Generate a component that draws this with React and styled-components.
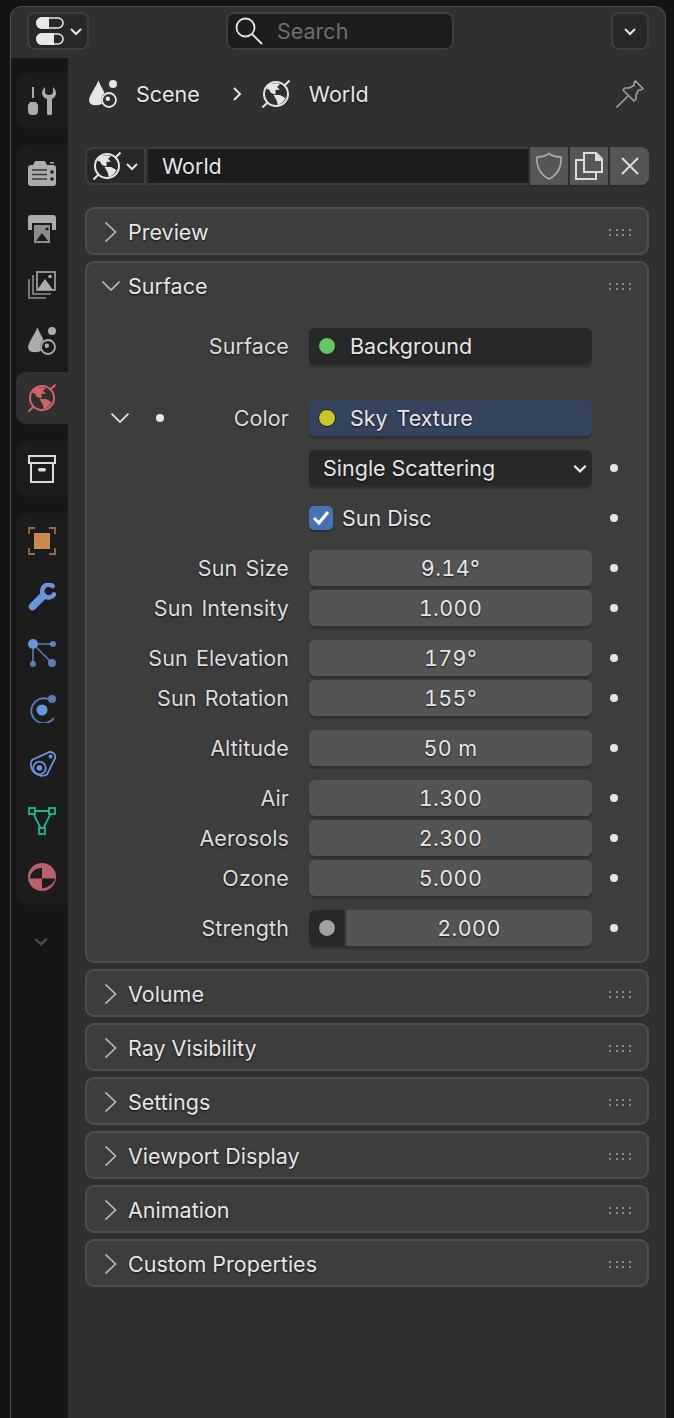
import React from "react"
import styled, { createGlobalStyle } from "styled-components"

const GlobalStyle = createGlobalStyle`
  html, body {
    margin: 0;
    padding: 0;
    background: #141414;
  }
  * {
    box-sizing: border-box;
  }
`

const Frame = styled.div`
  width: 656px;
  height: 1412px;
  margin: 6px 0 0 10px;
  background: #303030;
  border: 1px solid #505050;
  border-bottom: none;
  border-radius: 12px 12px 0 0;
  display: flex;
  flex-direction: column;
  overflow: hidden;
  font-family: Inter, "Noto Sans", sans-serif;
  font-size: 21.5px;
  color: #e6e6e6;
`

const TopBar = styled.div`
  height: 51px;
  flex: none;
  display: flex;
  align-items: flex-start;
  padding: 5px 16px 0 16px;
`

const HeaderButton = styled.div`
  width: ${(p) => p.$width}px;
  height: 38px;
  background: #282828;
  border: 2px solid #3d3d3d;
  border-radius: 8px;
  display: flex;
  align-items: center;
  padding-left: ${(p) => p.$pad || 0}px;
  gap: 5px;
  justify-content: ${(p) => (p.$pad ? "flex-start" : "center")};
  margin-left: ${(p) => (p.$push ? "auto" : "0")};
`

const SearchBox = styled.div`
  width: 228px;
  height: 38px;
  margin-left: 137px;
  background: #1d1d1d;
  border: 2px solid #3d3d3d;
  border-radius: 8px;
  display: flex;
  align-items: center;
  padding-left: 7px;
  gap: 14px;
  color: #6e6e6e;
`

const Body = styled.div`
  flex: 1;
  display: flex;
  min-height: 0;
`

const Sidebar = styled.div`
  width: 57px;
  flex: none;
  background: #161616;
  padding: 15px 0 0 5px;
  display: flex;
  flex-direction: column;
  gap: 16px;
`

const TabGroup = styled.div`
  background: #1c1c1c;
  border-radius: 10px 0 0 10px;
  display: flex;
  flex-direction: column;
`

const Tab = styled.div`
  height: ${(p) => (p.$active ? 52 : 56)}px;
  margin: ${(p) => (p.$active ? "3px 0 1px" : "0")};
  display: flex;
  align-items: center;
  padding-left: 12px;
  color: ${(p) => p.$color || "#acacac"};
  background: ${(p) => (p.$active ? "#303030" : "transparent")};
  border-radius: 10px 0 0 10px;
`

const MoreTabs = styled.div`
  height: 20px;
  margin-top: 10px;
  padding-left: 17px;
  display: flex;
  align-items: center;
  color: #4d4d4d;
`

const Main = styled.div`
  flex: 1;
  padding: 0 16px 0 17px;
  min-width: 0;
`

const Breadcrumb = styled.div`
  height: 72px;
  padding-bottom: 1px;
  display: flex;
  align-items: center;
  margin-right: 5px;
`

const Crumb = styled.span`
  margin-left: ${(p) => p.$gap}px;
  display: flex;
  align-items: center;
  text-shadow: 0 1px 2px rgba(0, 0, 0, 0.75);
`

const PinSlot = styled.span`
  margin-left: auto;
  display: flex;
  color: #9c9c9c;
`

const IdRow = styled.div`
  height: 38px;
  margin: 17px 0 22px;
  display: flex;
  gap: 2px;
`

const IdPicker = styled.div`
  width: 61px;
  background: #282828;
  border: 2px solid #3d3d3d;
  border-radius: 8px 0 0 8px;
  display: flex;
  align-items: center;
  padding-left: 6px;
  gap: 4px;
`

const IdName = styled.div`
  flex: 1;
  background: #1d1d1d;
  border-top: 2px solid #3d3d3d;
  border-bottom: 2px solid #3d3d3d;
  display: flex;
  align-items: center;
  padding-left: 14px;
  text-shadow: 0 1px 2px rgba(0, 0, 0, 0.75);
`

const IdButton = styled.div`
  width: ${(p) => (p.$last ? 39 : 38)}px;
  background: #565656;
  border-radius: ${(p) => (p.$last ? "0 8px 8px 0" : "0")};
  display: flex;
  align-items: center;
  justify-content: center;
  color: ${(p) => p.$color || "#dcdcdc"};
  box-shadow: 0 2px 0 #2a2a2a;
`

const Panels = styled.div`
  display: flex;
  flex-direction: column;
  gap: 6px;
`

const Panel = styled.section`
  background: #3d3d3d;
  border: 2px solid #4e4e4e;
  border-radius: 9px;
`

const PanelHead = styled.div`
  height: 44px;
  padding: 2px 16px 0 15px;
  display: flex;
  align-items: center;
  color: #e6e6e6;
  text-shadow: 0 1px 2px rgba(0, 0, 0, 0.75);
`

const PanelChevron = styled.span`
  width: 26px;
  display: flex;
  color: #b8b8b8;
`

const Grip = styled.span`
  margin-left: auto;
  display: grid;
  grid-template-columns: repeat(4, 2px);
  grid-auto-rows: 2px;
  gap: 3px 4.6px;
  span {
    background: #8a8a8a;
  }
`

const PanelBody = styled.div`
  padding: 21px 0 15px;
  display: flex;
  flex-direction: column;
  gap: 14px;
`

const Group = styled.div`
  display: flex;
  flex-direction: column;
  gap: 4px;
  margin-bottom: ${(p) => p.$after || 0}px;
`

const Row = styled.div`
  display: grid;
  grid-template-columns: 222px 283px 44px;
  height: 36px;
  align-items: center;
`

const LabelCell = styled.div`
  display: flex;
  align-items: center;
  justify-content: flex-end;
  width: 202px;
  color: #dcdcdc;
  word-spacing: 2px;
  letter-spacing: 0.1px;
  text-shadow: 0 1px 2px rgba(0, 0, 0, 0.75);
`

const Expander = styled.span`
  display: flex;
  align-items: center;
  margin-right: auto;
  padding-left: 24px;
  gap: 27px;
  color: #e6e6e6;
`

const Field = styled.div`
  height: 36px;
  border-radius: 6px;
  background: ${(p) => (p.$tone === "num" ? "#545454" : p.$tone === "link" ? "#35435c" : "#282828")};
  box-shadow: 0 3px 1px rgba(0, 0, 0, 0.2);
  display: flex;
  align-items: center;
  justify-content: ${(p) => (p.$tone === "num" ? "center" : "flex-start")};
  padding: 0 ${(p) => (p.$tone === "select" ? 4 : 0)}px 0 ${(p) => (p.$tone === "select" ? 14 : p.$tone === "num" ? 0 : 9)}px;
  text-shadow: 0 1px 2px rgba(0, 0, 0, 0.75);
  overflow: hidden;
  font-variant-numeric: tabular-nums;
  letter-spacing: ${(p) => (p.$tone === "num" ? "0.4px" : "0")};
  word-spacing: ${(p) => (p.$tone === "link" ? "3px" : "0")};
`

const Socket = styled.span`
  width: 18px;
  height: 18px;
  flex: none;
  border-radius: 50%;
  background: ${(p) => p.$color};
  border: 1.5px solid #1b1b1b;
  margin-right: ${(p) => p.$gap || 0}px;
`

const SelectArrow = styled.span`
  margin-left: auto;
  display: flex;
  color: #e6e6e6;
`

const CheckLine = styled.div`
  display: flex;
  align-items: center;
  gap: 9px;
  color: #e6e6e6;
  text-shadow: 0 1px 2px rgba(0, 0, 0, 0.75);
`

const CheckBox = styled.span`
  width: 24px;
  height: 24px;
  background: #4772b3;
  border-radius: 5px;
  box-shadow: 0 2px 1px rgba(0, 0, 0, 0.25);
  display: flex;
  align-items: center;
  justify-content: center;
`

const DotCell = styled.span`
  display: flex;
  justify-content: center;
`

const Dot = styled.span`
  width: 8px;
  height: 8px;
  border-radius: 50%;
  background: #e6e6e6;
`

const SliderCap = styled.span`
  width: 37px;
  align-self: stretch;
  background: #282828;
  border-right: 2px solid #333;
  display: flex;
  align-items: center;
  justify-content: center;
  flex: none;
`

const SliderValue = styled.span`
  flex: 1;
  text-align: center;
`

const Icon = ({ size = 28, children, ...rest }) => (
  <svg width={size} height={size} viewBox="0 0 28 28" fill="none" {...rest}>
    {children}
  </svg>
)

const Chevron = ({ dir = "down", size = 14, weight = 2 }) => {
  const d = {
    down: "M2 5 L7 10 L12 5",
    right: "M4 1 L10 7 L4 13",
  }[dir]
  return (
    <svg width={size} height={size} viewBox="0 0 14 14" fill="none">
      <path d={d} stroke="currentColor" strokeWidth={weight} />
    </svg>
  )
}

const PanelArrow = ({ open }) => (
  <svg width="18" height="20" viewBox="0 0 18 20" fill="none">
    <path d={open ? "M0.5 5.5 L9 14 L17.5 5.5" : "M3.5 0.5 L13.5 10 L3.5 19.5"} stroke="currentColor" strokeWidth="1.7" />
  </svg>
)

const EditorIcon = () => (
  <Icon style={{ color: "#e8e8e8" }}>
    <rect x="1" y="1" width="26" height="10" rx="5" stroke="currentColor" strokeWidth="1.6" />
    <path d="M6 0 H13 V12 H6 A6 6 0 0 1 6 0 Z" fill="currentColor" />
    <rect x="1" y="17" width="26" height="10" rx="5" stroke="currentColor" strokeWidth="1.6" />
    <path d="M6 16 H18 V28 H6 A6 6 0 0 1 6 16 Z" fill="currentColor" />
  </Icon>
)

const SearchIcon = () => (
  <Icon style={{ color: "#e6e6e6" }}>
    <circle cx="10.5" cy="10.5" r="9" stroke="currentColor" strokeWidth="1.8" />
    <path d="M17 17 L27 27" stroke="currentColor" strokeWidth="1.9" />
  </Icon>
)

const SceneIcon = () => (
  <Icon>
    <path d="M9.5 0.5 C11 5 14 9 15.5 13 C12.5 15.5 11.5 19 13 24 C9 25.5 5 25.5 2.5 24.5 C0 23 -0.5 20 0.8 17 C3 12 7 6 9.5 0.5 Z" fill="currentColor" />
    <circle cx="24" cy="4" r="4" fill="currentColor" />
    <circle cx="20" cy="20" r="7" stroke="currentColor" strokeWidth="1.8" />
    <circle cx="18.8" cy="18.8" r="2.2" fill="currentColor" />
  </Icon>
)

const WorldIcon = () => (
  <Icon>
    <circle cx="14" cy="14" r="12" stroke="currentColor" strokeWidth="2" />
    <path d="M22.5 5.5 L27.5 0.5 M0.5 27.5 L5.5 22.5" stroke="currentColor" strokeWidth="2" />
    <path d="M6 5.5 C9 3 15 2.5 18 4 L15 7 L18 9.5 L13.5 10 L13.5 14.5 L9 13 L7 9.5 L4.5 9 Z" fill="currentColor" />
    <path d="M11.5 15 L18 15 L23.5 18 L21 22 L16 25.5 L14.5 20 Z" fill="currentColor" />
  </Icon>
)

const PinIcon = () => (
  <Icon>
    <path
      d="M19.5 1 L27 8.5 L24.5 10 L22.5 10 L20 15 L20 19 L18 21 L7 10 L9 8 L13 8 L18 5.5 L18 3.5 Z"
      stroke="currentColor"
      strokeWidth="1.7"
      strokeLinejoin="round"
    />
    <path d="M0.5 27.5 L12 16" stroke="currentColor" strokeWidth="1.7" />
  </Icon>
)

const ShieldIcon = () => (
  <Icon>
    <path
      d="M14 1.5 C17 4 21 5 26 5 C26.5 14 24 22 14 27 C4 22 1.5 14 2 5 C7 5 11 4 14 1.5 Z"
      stroke="currentColor"
      strokeWidth="1.7"
    />
  </Icon>
)

const CopyIcon = () => (
  <Icon>
    <path d="M9 8 H1 V27 H21 V20" stroke="currentColor" strokeWidth="2" />
    <path d="M9 1 H21 L27 7 V20 H9 Z" stroke="currentColor" strokeWidth="2" />
    <path d="M20 1 L28 9 H20 Z" fill="currentColor" />
  </Icon>
)

const CloseIcon = () => (
  <svg width="18" height="18" viewBox="0 0 18 18" fill="none">
    <path d="M1 1 L17 17 M17 1 L1 17" stroke="currentColor" strokeWidth="2" />
  </svg>
)

const ToolIcon = () => (
  <Icon>
    <path d="M5 0 V11" stroke="currentColor" strokeWidth="2" />
    <path d="M2 15 H8 L10 18 V24 A4 4 0 0 1 6 28 H4 A4 4 0 0 1 0 24 V18 Z" fill="currentColor" />
    <path
      d="M17 0 V5 C17 7 19 8 21 8 C23 8 25 7 25 5 V0 C27 2 28 4 28 6 C28 9 26 11 24 12 V26 A2.5 2.5 0 0 1 19 26 V12 C16 11 14 9 14 6 C14 4 15 2 17 0 Z"
      fill="currentColor"
    />
  </Icon>
)

const RenderIcon = () => (
  <Icon>
    <path
      d="M3 6 H5 L7 2 H17 L19 6 H25 A3 3 0 0 1 28 9 V24 A3 3 0 0 1 25 27 H3 A3 3 0 0 1 0 24 V9 A3 3 0 0 1 3 6 Z"
      fill="currentColor"
    />
    <rect x="22" y="3" width="4" height="1.5" fill="currentColor" />
    <path d="M4 11 H19 M4 15.5 H19 M4 20 H19" stroke="#1c1c1c" strokeWidth="1.3" opacity="0.8" />
    <circle cx="24" cy="13" r="1.8" fill="#1c1c1c" />
    <circle cx="24" cy="20" r="1.8" fill="#1c1c1c" />
  </Icon>
)

const OutputIcon = () => (
  <Icon>
    <path d="M3 0 H25 A3 3 0 0 1 28 3 V15 H24 V8 H4 V15 H0 V3 A3 3 0 0 1 3 0 Z" fill="currentColor" />
    <rect x="6" y="10" width="16" height="18" fill="#8d8d8d" />
    <path d="M8 26 L14 18 L20 26 Z" fill="#1c1c1c" />
    <circle cx="19" cy="14" r="1.6" fill="#1c1c1c" />
  </Icon>
)

const LayersIcon = () => (
  <Icon>
    <rect x="9" y="1" width="18" height="18" stroke="currentColor" strokeWidth="1.6" />
    <path d="M9 19 L17 8 L25 19 Z" fill="currentColor" />
    <circle cx="22" cy="5.5" r="1.8" fill="currentColor" />
    <path d="M6 5 H5 V23 H23" stroke="#8e8e8e" strokeWidth="1.6" />
    <path d="M2 9 H1 V27 H18" stroke="#8e8e8e" strokeWidth="1.6" />
  </Icon>
)

const CollectionIcon = () => (
  <Icon>
    <rect x="1" y="1" width="26" height="7" stroke="currentColor" strokeWidth="2" />
    <path d="M3 8 V27 H25 V8" stroke="currentColor" strokeWidth="2" />
    <rect x="10" y="13" width="8" height="3.5" rx="1.75" fill="currentColor" />
  </Icon>
)

const ObjectIcon = () => (
  <Icon>
    <rect x="6" y="6" width="16" height="16" fill="#c88a50" />
    <path d="M1 7 V1 H7 M21 1 H27 V7 M27 21 V27 H21 M7 27 H1 V21" stroke="#9a6e45" strokeWidth="1.8" />
  </Icon>
)

const ModifierIcon = () => (
  <Icon>
    <path d="M4.5 23.5 L15 13" stroke="currentColor" strokeWidth="7.5" strokeLinecap="round" />
    <path d="M24.5 3 A6.4 6.4 0 1 0 26 11.5" stroke="currentColor" strokeWidth="4.6" strokeLinecap="round" />
  </Icon>
)

const ParticlesIcon = () => (
  <Icon>
    <path d="M5 5 H25 M5 5 V24 M5 5 L23 23" stroke="currentColor" strokeWidth="1.6" opacity="0.8" />
    <circle cx="5" cy="5" r="5" fill="currentColor" />
    <circle cx="25" cy="5" r="3" fill="currentColor" opacity="0.8" />
    <circle cx="5" cy="25" r="3" fill="currentColor" opacity="0.8" />
    <circle cx="24" cy="24" r="4" fill="currentColor" opacity="0.8" />
  </Icon>
)

const PhysicsIcon = () => (
  <Icon>
    <path d="M20 4 A12.5 12.5 0 1 0 26 23" stroke="currentColor" strokeWidth="1.8" opacity="0.8" />
    <circle cx="14" cy="15" r="5.5" fill="currentColor" />
    <circle cx="24" cy="4" r="4" fill="currentColor" opacity="0.8" />
  </Icon>
)

const ConstraintIcon = () => (
  <Icon>
    <path d="M4 9 L21 1.2 A5 5 0 0 1 27.2 7 L19 23.5 A11 11 0 0 1 4 9 Z" stroke="currentColor" strokeWidth="1.8" />
    <circle cx="11.5" cy="17" r="6.3" stroke="currentColor" strokeWidth="1.8" />
    <circle cx="11.5" cy="17" r="2.8" fill="currentColor" />
    <circle cx="22.5" cy="5.5" r="2" fill="currentColor" />
  </Icon>
)

const MeshIcon = () => (
  <Icon>
    <path d="M4 4 H24 L14 24 Z" stroke="currentColor" strokeWidth="1.8" />
    <rect x="1" y="1" width="6" height="6" fill="#1c1c1c" stroke="currentColor" strokeWidth="1.8" />
    <rect x="21" y="1" width="6" height="6" fill="#1c1c1c" stroke="currentColor" strokeWidth="1.8" />
    <rect x="11" y="21" width="6" height="6" fill="#1c1c1c" stroke="currentColor" strokeWidth="1.8" />
  </Icon>
)

const MaterialIcon = () => (
  <Icon>
    <circle cx="14" cy="14" r="14" fill="currentColor" />
    <path d="M14 5 V15.5 H2 C2 10 6.5 5 14 5 Z" fill="#1c1c1c" />
    <path d="M14 15.5 H27 C26 20 21 24.5 14 25.5 Z" fill="#1c1c1c" />
  </Icon>
)

const Check = () => (
  <svg width="18" height="16" viewBox="0 0 18 16" fill="none">
    <path d="M2 8 L7 13 L16 2" stroke="#fff" strokeWidth="3" />
  </svg>
)

const tabGroups = [
  [{ icon: ToolIcon }],
  [
    { icon: RenderIcon },
    { icon: OutputIcon },
    { icon: LayersIcon },
    { icon: SceneIcon },
    { icon: WorldIcon, color: "#d2616c", active: true },
  ],
  [{ icon: CollectionIcon, color: "#dcdcdc" }],
  [
    { icon: ObjectIcon },
    { icon: ModifierIcon, color: "#6a94dc" },
    { icon: ParticlesIcon, color: "#6a94dc" },
    { icon: PhysicsIcon, color: "#6a94dc" },
    { icon: ConstraintIcon, color: "#6a94dc" },
    { icon: MeshIcon, color: "#1fb892" },
    { icon: MaterialIcon, color: "#b9606c" },
  ],
]

const valueGroups = [
  [
    ["Sun Size", "9.14°"],
    ["Sun Intensity", "1.000"],
  ],
  [
    ["Sun Elevation", "179°"],
    ["Sun Rotation", "155°"],
  ],
  [["Altitude", "50 m"]],
  [
    ["Air", "1.300"],
    ["Aerosols", "2.300"],
    ["Ozone", "5.000"],
  ],
]

const PanelHeader = ({ title, open }) => (
  <PanelHead>
    <PanelChevron>
      <PanelArrow open={open} />
    </PanelChevron>
    {title}
    <Grip>
      {Array.from({ length: 8 }).map((_, i) => (
        <span key={i} />
      ))}
    </Grip>
  </PanelHead>
)

const PropRow = ({ label, children, dot = true, extra }) => (
  <Row>
    <LabelCell>
      {extra}
      {label}
    </LabelCell>
    {children}
    <DotCell>{dot && <Dot />}</DotCell>
  </Row>
)

export default function App() {
  return (
    <>
      <GlobalStyle />
      <Frame>
        <TopBar>
          <HeaderButton $width={62} $pad={7}>
            <EditorIcon />
            <Chevron />
          </HeaderButton>
          <SearchBox>
            <SearchIcon />
            Search
          </SearchBox>
          <HeaderButton $width={38} $push>
            <Chevron />
          </HeaderButton>
        </TopBar>
        <Body>
          <Sidebar>
            {tabGroups.map((tabs, i) => (
              <TabGroup key={i}>
                {tabs.map((t, j) => (
                  <Tab key={j} $color={t.color} $active={t.active}>
                    <t.icon />
                  </Tab>
                ))}
              </TabGroup>
            ))}
            <MoreTabs>
              <Chevron size={16} />
            </MoreTabs>
          </Sidebar>
          <Main>
            <Breadcrumb>
              <Crumb $gap={4} style={{ color: "#e6e6e6" }}>
                <SceneIcon />
              </Crumb>
              <Crumb $gap={19}>Scene</Crumb>
              <Crumb $gap={30}>
                <Chevron dir="right" size={14} />
              </Crumb>
              <Crumb $gap={18}>
                <WorldIcon />
              </Crumb>
              <Crumb $gap={19}>World</Crumb>
              <PinSlot>
                <PinIcon />
              </PinSlot>
            </Breadcrumb>
            <IdRow>
              <IdPicker>
                <WorldIcon />
                <Chevron />
              </IdPicker>
              <IdName>World</IdName>
              <IdButton $color="#a9a9a9">
                <ShieldIcon />
              </IdButton>
              <IdButton>
                <CopyIcon />
              </IdButton>
              <IdButton $last>
                <CloseIcon />
              </IdButton>
            </IdRow>
            <Panels>
              <Panel>
                <PanelHeader title="Preview" />
              </Panel>
              <Panel>
                <PanelHeader title="Surface" open />
                <PanelBody>
                  <Group $after={22}>
                    <PropRow label="Surface" dot={false}>
                      <Field>
                        <Socket $color="#63c763" $gap={14} />
                        Background
                      </Field>
                    </PropRow>
                  </Group>
                  <PropRow
                    label="Color"
                    dot={false}
                    extra={
                      <Expander>
                        <PanelArrow open />
                        <Dot />
                      </Expander>
                    }
                  >
                    <Field $tone="link">
                      <Socket $color="#c7c729" $gap={14} />
                      Sky Texture
                    </Field>
                  </PropRow>
                  <PropRow label="">
                    <Field $tone="select">
                      Single Scattering
                      <SelectArrow>
                        <Chevron size={16} />
                      </SelectArrow>
                    </Field>
                  </PropRow>
                  <PropRow label="">
                    <CheckLine>
                      <CheckBox>
                        <Check />
                      </CheckBox>
                      Sun Disc
                    </CheckLine>
                  </PropRow>
                  {valueGroups.map((rows, i) => (
                    <Group key={i}>
                      {rows.map(([label, value]) => (
                        <PropRow key={label} label={label}>
                          <Field $tone="num">{value}</Field>
                        </PropRow>
                      ))}
                    </Group>
                  ))}
                  <PropRow label="Strength">
                    <Field $tone="num">
                      <SliderCap>
                        <Socket $color="#a1a1a1" />
                      </SliderCap>
                      <SliderValue>2.000</SliderValue>
                    </Field>
                  </PropRow>
                </PanelBody>
              </Panel>
              {["Volume", "Ray Visibility", "Settings", "Viewport Display", "Animation", "Custom Properties"].map((title) => (
                <Panel key={title}>
                  <PanelHeader title={title} />
                </Panel>
              ))}
            </Panels>
          </Main>
        </Body>
      </Frame>
    </>
  )
}
